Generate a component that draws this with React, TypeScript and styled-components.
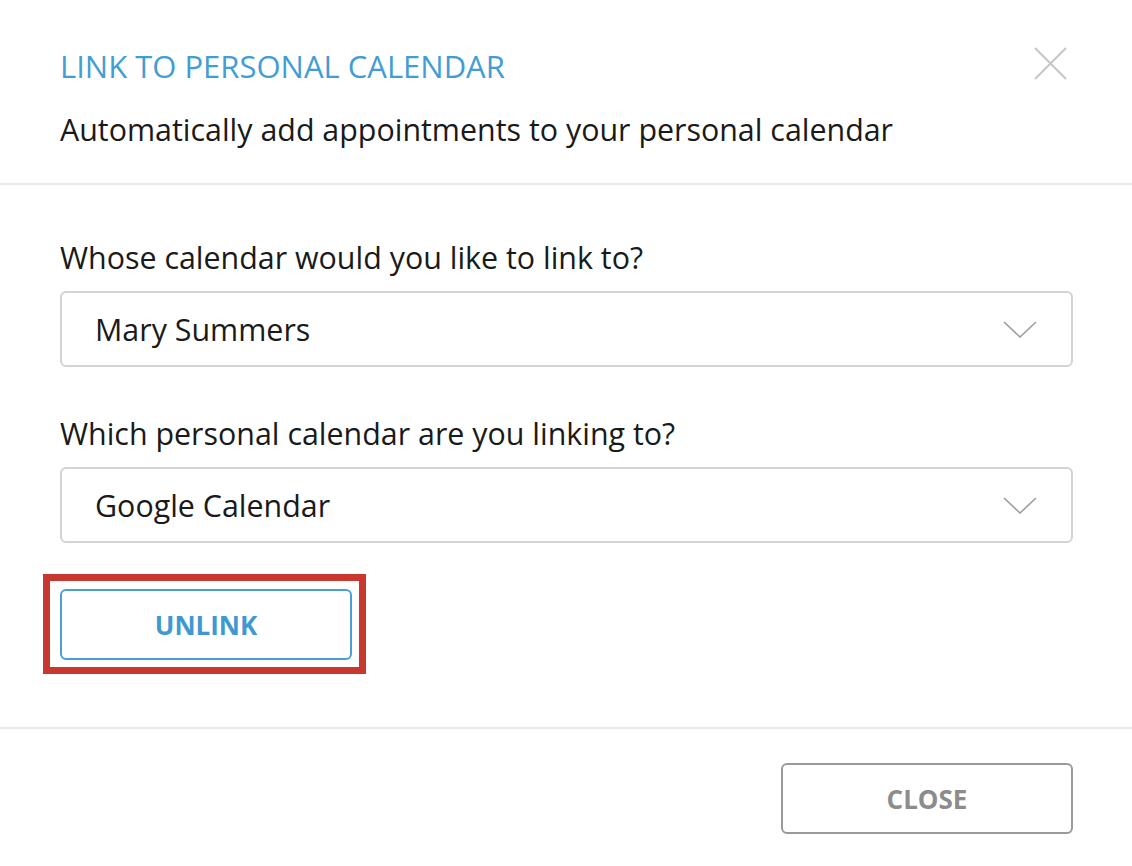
import styled, { createGlobalStyle } from 'styled-components';

const GlobalStyle = createGlobalStyle`
  html, body {
    margin: 0;
    padding: 0;
    background: #ffffff;
  }
  body {
    font-family: 'Open Sans', 'Noto Sans', Arial, sans-serif;
    color: #1a1a1a;
  }
`;

const Dialog = styled.div`
  width: 1132px;
  height: 866px;
  display: flex;
  flex-direction: column;
  background: #fff;
`;

const Header = styled.header`
  padding: 47px 59px 34px 60px;
  border-bottom: 2px solid #e9e9e9;
`;

const TitleRow = styled.div`
  display: flex;
  justify-content: space-between;
  align-items: flex-start;
`;

const Title = styled.h1`
  margin: 0;
  font-size: 31px;
  line-height: 38px;
  font-weight: 400;
  color: #439dd5;
`;

const CloseIcon = styled.button`
  width: 33px;
  height: 33px;
  margin: 0 6px 0 0;
  padding: 0;
  border: none;
  background: none;
  cursor: pointer;
  display: flex;
  align-items: center;
  justify-content: center;
`;

const Subtitle = styled.p`
  margin: 26px 0 0;
  font-size: 30.4px;
  line-height: 38px;
  color: #1a1a1a;
`;

const Body = styled.section`
  padding: 54px 59px 53px 60px;
  border-bottom: 2px solid #e9e9e9;
  display: flex;
  flex-direction: column;
  align-items: flex-start;
`;

const Label = styled.label<{ $gap?: number }>`
  margin-top: ${(p) => p.$gap ?? 0}px;
  font-size: 30.4px;
  line-height: 38px;
  color: #1a1a1a;
`;

const Select = styled.div`
  box-sizing: border-box;
  width: 100%;
  height: 76px;
  margin-top: 14px;
  padding: 0 34px 0 33px;
  border: 2px solid #d3d3d3;
  border-radius: 6px;
  display: flex;
  align-items: center;
  justify-content: space-between;
  font-size: 30.4px;
  color: #1a1a1a;
`;

const Highlight = styled.div`
  margin: 31px 0 0 -17px;
  padding: 8px 7px 7px 10px;
  border: 7px solid #c9382e;
  display: inline-flex;
`;

const Button = styled.button<{ $tone: 'blue' | 'gray' }>`
  box-sizing: border-box;
  width: 292px;
  height: 71px;
  border-radius: 6px;
  background: #fff;
  border: 2px solid ${(p) => (p.$tone === 'blue' ? '#4a9fd6' : '#9a9a9a')};
  color: ${(p) => (p.$tone === 'blue' ? '#3f98d2' : '#8c8c8c')};
  font-family: 'Open Sans', 'Noto Sans', Arial, sans-serif;
  font-size: 26px;
  font-weight: 700;
  cursor: pointer;
`;

const Footer = styled.footer`
  padding: 34px 59px 32px 60px;
  display: flex;
  justify-content: flex-end;
`;

const Chevron = () => (
  <svg width="34" height="17" viewBox="0 0 34 17" fill="none">
    <path d="M1 1 L17 16 L33 1" stroke="#9d9d9d" strokeWidth="1.6" />
  </svg>
);

const App = () => (
  <>
    <GlobalStyle />
    <Dialog>
      <Header>
        <TitleRow>
          <Title>LINK TO PERSONAL CALENDAR</Title>
          <CloseIcon aria-label="Close">
            <svg width="33" height="33" viewBox="0 0 33 33" fill="none">
              <path d="M1 1 L32 32 M32 1 L1 32" stroke="#c6c6c6" strokeWidth="2" />
            </svg>
          </CloseIcon>
        </TitleRow>
        <Subtitle>Automatically add appointments to your personal calendar</Subtitle>
      </Header>
      <Body>
        <Label>Whose calendar would you like to link to?</Label>
        <Select>
          <span>Mary Summers</span>
          <Chevron />
        </Select>
        <Label $gap={48}>Which personal calendar are you linking to?</Label>
        <Select>
          <span>Google Calendar</span>
          <Chevron />
        </Select>
        <Highlight>
          <Button $tone="blue">UNLINK</Button>
        </Highlight>
      </Body>
      <Footer>
        <Button $tone="gray">CLOSE</Button>
      </Footer>
    </Dialog>
  </>
);

export default App;
